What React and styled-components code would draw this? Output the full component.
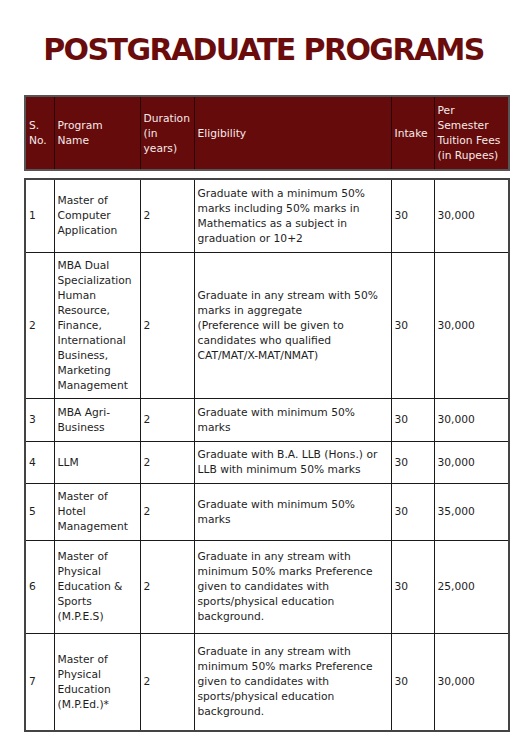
import React from "react";
import styled, { createGlobalStyle } from "styled-components";

const columns = [29, 86, 54, 197, 43, 75];

const headers = [
  ["S.", "No."],
  ["Program", "Name"],
  ["Duration", "(in", "years)"],
  ["Eligibility"],
  ["Intake"],
  ["Per", "Semester", "Tuition Fees", "(in Rupees)"],
];

const programs = [
  {
    no: "1",
    name: ["Master of", "Computer", "Application"],
    eligibility: [
      "Graduate with a minimum 50%",
      "marks including 50% marks in",
      "Mathematics as a subject in",
      "graduation or 10+2",
    ],
    fees: "30,000",
    height: 73,
  },
  {
    no: "2",
    name: [
      "MBA Dual",
      "Specialization",
      "Human",
      "Resource,",
      "Finance,",
      "International",
      "Business,",
      "Marketing",
      "Management",
    ],
    eligibility: [
      "Graduate in any stream with 50%",
      "marks in aggregate",
      "(Preference will be given to",
      "candidates who qualified",
      "CAT/MAT/X-MAT/NMAT)",
    ],
    fees: "30,000",
    height: 146,
  },
  {
    no: "3",
    name: ["MBA Agri-", "Business"],
    eligibility: ["Graduate with minimum 50%", "marks"],
    fees: "30,000",
    height: 43,
  },
  {
    no: "4",
    name: ["LLM"],
    eligibility: ["Graduate with B.A. LLB (Hons.) or", "LLB with minimum 50% marks"],
    fees: "30,000",
    height: 42,
  },
  {
    no: "5",
    name: ["Master of", "Hotel", "Management"],
    eligibility: ["Graduate with minimum 50%", "marks"],
    fees: "35,000",
    height: 57,
  },
  {
    no: "6",
    name: ["Master of", "Physical", "Education &", "Sports", "(M.P.E.S)"],
    eligibility: [
      "Graduate in any stream with",
      "minimum 50% marks Preference",
      "given to candidates with",
      "sports/physical education",
      "background.",
    ],
    fees: "25,000",
    height: 93,
  },
  {
    no: "7",
    name: ["Master of", "Physical", "Education", "(M.P.Ed.)*"],
    eligibility: [
      "Graduate in any stream with",
      "minimum 50% marks Preference",
      "given to candidates with",
      "sports/physical education",
      "background.",
    ],
    fees: "30,000",
    height: 98,
  },
];

const Lines = ({ lines }) =>
  lines.map((line, i) => (
    <React.Fragment key={i}>
      {i > 0 && <br />}
      {line}
    </React.Fragment>
  ));

const Cols = () => (
  <colgroup>
    {columns.map((w, i) => (
      <col key={i} style={{ width: w }} />
    ))}
  </colgroup>
);

export default function App() {
  return (
    <>
      <GlobalStyle />
      <Page>
        <Title>POSTGRADUATE PROGRAMS</Title>
        <HeadTable>
          <Cols />
          <thead>
            <tr>
              {headers.map((h, i) => (
                <HeadCell key={i}>
                  <Lines lines={h} />
                </HeadCell>
              ))}
            </tr>
          </thead>
        </HeadTable>
        <BodyTable>
          <Cols />
          <tbody>
            {programs.map((p) => (
              <Row key={p.no} $height={p.height}>
                <Cell>{p.no}</Cell>
                <Cell>
                  <Lines lines={p.name} />
                </Cell>
                <Cell>2</Cell>
                <Cell>
                  <Lines lines={p.eligibility} />
                </Cell>
                <Cell>30</Cell>
                <Cell>{p.fees}</Cell>
              </Row>
            ))}
          </tbody>
        </BodyTable>
      </Page>
    </>
  );
}

const GlobalStyle = createGlobalStyle`
  body {
    margin: 0;
    background: #ffffff;
    font-family: "DejaVu Sans", "Noto Sans", sans-serif;
  }
`;

const Page = styled.div`
  width: 527px;
  padding: 31px 0 0 24px;
  box-sizing: border-box;
`;

const Title = styled.h1`
  margin: 0 0 26px -24px;
  text-align: center;
  font-family: "DejaVu Sans", sans-serif;
  font-weight: 800;
  font-size: 30px;
  line-height: 38px;
  color: #6a0c0c;
  letter-spacing: -1.6px;
`;

const HeadTable = styled.table`
  width: 484px;
  table-layout: fixed;
  border-collapse: collapse;
  border: 2px solid #555555;
  margin-bottom: 7px;
`;

const HeadCell = styled.th`
  height: 72px;
  padding: 0 3px;
  background: #650b0b;
  color: #f6e9e9;
  border: 1px solid #2a0505;
  font-weight: 400;
  font-size: 10.7px;
  line-height: 15px;
  text-align: left;
  vertical-align: middle;
  white-space: nowrap;
`;

const BodyTable = styled.table`
  width: 484px;
  table-layout: fixed;
  border-collapse: collapse;
  border: 2px solid #444444;
`;

const Row = styled.tr`
  height: ${(p) => p.$height}px;
`;

const Cell = styled.td`
  padding: 0 3px;
  border: 1px solid #1a1a1a;
  color: #1e1e1e;
  font-size: 10.7px;
  line-height: 15px;
  vertical-align: middle;
  white-space: nowrap;
  overflow: hidden;
`;
